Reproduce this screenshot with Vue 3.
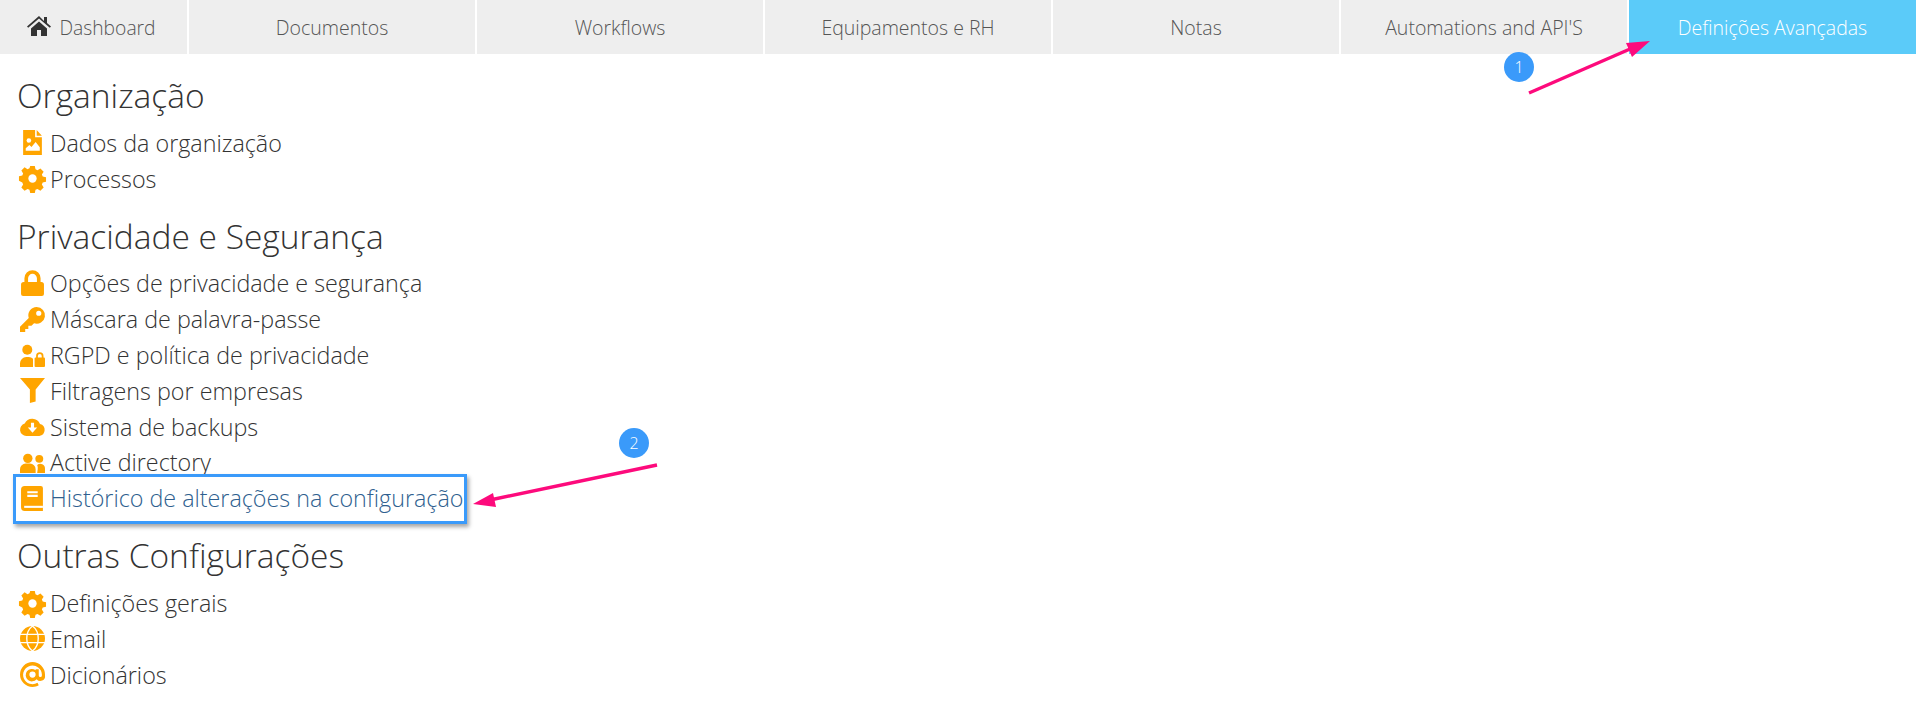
<script setup>
const tabs = [
  { label: 'Dashboard', home: true },
  { label: 'Documentos' },
  { label: 'Workflows' },
  { label: 'Equipamentos e RH' },
  { label: 'Notas' },
  { label: "Automations and API'S" },
  { label: 'Definições Avançadas', active: true },
]
const gear = 'M9.800 0h4.400l.7 3.200 1.900.8 2.800-1.700 3.100 3.100-1.700 2.800.8 1.900 3.200.7v4.400l-3.200.7-.8 1.900 1.700 2.800-3.100 3.100-2.800-1.700-1.900.8-.7 3.200H9.800l-.7-3.200-1.900-.8-2.800 1.700-3.100-3.100 1.700-2.800-.8-1.900L-1 14.200V9.800l3.200-.7.8-1.900-1.700-2.800 3.100-3.100 2.800 1.700 1.900-.8z'
const sections = [
  { title: 'Organização', items: [
    { label: 'Dados da organização', icon: 'file' },
    { label: 'Processos', icon: 'gear' },
  ] },
  { title: 'Privacidade e Segurança', items: [
    { label: 'Opções de privacidade e segurança', icon: 'lock' },
    { label: 'Máscara de palavra-passe', icon: 'key' },
    { label: 'RGPD e política de privacidade', icon: 'userlock' },
    { label: 'Filtragens por empresas', icon: 'filter' },
    { label: 'Sistema de backups', icon: 'cloud' },
    { label: 'Active directory', icon: 'users' },
    { label: 'Histórico de alterações na configuração', icon: 'book', link: true },
  ] },
  { title: 'Outras Configurações', items: [
    { label: 'Definições gerais', icon: 'gear' },
    { label: 'Email', icon: 'globe' },
    { label: 'Dicionários', icon: 'at' },
  ] },
]
</script>

<template>
  <div class="page">
    <nav class="tabs">
      <a v-for="t in tabs" :key="t.label" class="tab" :class="{ active: t.active, first: t.home }">
        <svg v-if="t.home" class="home" viewBox="0 0 24 20"><path d="M12 0L0 10.400l1.200 1.400L12 2.600l10.800 9.200 1.200-1.400-4-3.400V1h-3v3.900zM4 12.500V20h6v-6h4v6h6v-7.500L12 5.600z" fill="#333"/></svg>
        <span>{{ t.label }}</span>
      </a>
    </nav>
    <main class="content">
      <section v-for="s in sections" :key="s.title" class="section">
        <h2>{{ s.title }}</h2>
        <ul>
          <li v-for="i in s.items" :key="i.label" :class="{ link: i.link }">
            <svg class="ico" viewBox="0 0 24 24">
              <g v-if="i.icon === 'file'"><path d="M3 0h11.500v7H21v17H3z"/><path d="M16 0l5 5.500h-5z"/><circle cx="8.500" cy="10" r="2.200" fill="#fff"/><path d="M5.500 20v-2.500l3.500-3 2 1.700 4-4.700 4 5V20z" fill="#fff"/></g>
              <g v-if="i.icon === 'gear'"><path :d="gear"/><circle cx="12" cy="12" r="4" fill="#fff"/></g>
              <g v-if="i.icon === 'lock'"><path d="M1 13a2.500 2.500 0 0 1 2.500-2.500h17A2.500 2.500 0 0 1 23 13v9a2 2 0 0 1-2 2H3a2 2 0 0 1-2-2z"/><path d="M6 11V7a6 6 0 0 1 12 0v4" fill="none" stroke="#ffa500" stroke-width="3.500"/></g>
              <path v-if="i.icon === 'key'" d="M16 0a8 8 0 1 1-2.500 15.600L11 18H8v3H5v3H0v-5l8.400-8.400A8 8 0 0 1 16 0zm2 3.500a2.500 2.500 0 1 0 0 5 2.500 2.500 0 0 0 0-5z" fill-rule="evenodd"/>
              <g v-if="i.icon === 'userlock'"><circle cx="7" cy="6.500" r="4.800"/><path d="M0 23v-3.500A6 6 0 0 1 6 13.500h2.500a6 6 0 0 1 4 1.500v8z"/><rect x="14" y="14" width="10" height="9" rx="1"/><path d="M16.300 14.500v-2a2.700 2.700 0 0 1 5.400 0v2" fill="none" stroke="#ffa500" stroke-width="1.700"/></g>
              <path v-if="i.icon === 'filter'" d="M0 0h24L15 11v11.500L9.500 24V11z"/>
              <g v-if="i.icon === 'cloud'"><path d="M6 21a6 6 0 0 1-1.500-11.800A8 8 0 0 1 19.200 9.600 5.800 5.800 0 0 1 18.500 21z"/><path d="M10.500 8.500h3V13H16.500L12 18l-4.500-5h3z" fill="#fff"/></g>
              <g v-if="i.icon === 'users'"><circle cx="7.500" cy="8" r="4.500"/><circle cx="18.500" cy="8.500" r="3.800"/><path d="M0 22v-3.500A5.500 5.500 0 0 1 5.500 13h4a5.500 5.500 0 0 1 5.500 5.500V22z"/><path d="M16.500 22H24v-4a4.500 4.500 0 0 0-7.500-3.500 7 7 0 0 1 .5 4z"/></g>
              <g v-if="i.icon === 'book'"><path d="M4.500 0H20a2 2 0 0 1 2 2v22H4.500A3.500 3.500 0 0 1 1 20.500v-17A3.500 3.500 0 0 1 4.500 0z"/><path d="M7 5h10v2H7zm0 3.500h10v2H7z" fill="#fff"/><path d="M4 19h18v2H4z" fill="#fff"/></g>
              <g v-if="i.icon === 'globe'"><circle cx="12" cy="12" r="12"/><path d="M12 0c-4 3-5.500 8-5.500 12s1.500 9 5.500 12c4-3 5.500-8 5.500-12S16 3 12 0zM0 8h24M0 16h24" fill="none" stroke="#fff" stroke-width="1.300"/></g>
              <path v-if="i.icon === 'at'" d="M12 0a12 12 0 0 0 0 24c2.200 0 4.300-.6 6-1.600l-1.200-2.400A9 9 0 1 1 21 12v1a1.500 1.500 0 0 1-3 0V7h-3v.800A6 6 0 1 0 16 16.500a4.500 4.500 0 0 0 8-3.500v-1A12 12 0 0 0 12 0zm0 9a3 3 0 1 1 0 6 3 3 0 0 1 0-6z" fill-rule="evenodd"/>
            </svg>
            <span>{{ i.label }}</span>
          </li>
        </ul>
      </section>
    </main>

    <div class="highlight"></div>
    <div class="badge b1">1</div>
    <div class="badge b2">2</div>
    <svg class="arrows" viewBox="0 0 1916 704">
      <path d="M1529 93L1630 49" stroke="#fd0a7c" stroke-width="3.500" fill="none"/>
      <path d="M1650 41L1626 43 1632 57z" fill="#fd0a7c"/>
      <path d="M657 465L490 500" stroke="#fd0a7c" stroke-width="3.500" fill="none"/>
      <path d="M473 504L493 493 496 507z" fill="#fd0a7c"/>
    </svg>
  </div>
</template>

<style>
html, body { margin: 0; background: #fff; }
</style>

<style scoped>
.page {
  position: relative;
  width: 1916px;
  height: 704px;
  overflow: hidden;
  font-family: "Open Sans", "Liberation Sans", sans-serif;
  font-weight: 300;
  color: #333;
}
.tabs {
  display: grid;
  grid-template-columns: 187px repeat(5, 286px) 1fr;
  gap: 2px;
  height: 54px;
}
.tab {
  display: flex;
  align-items: center;
  justify-content: center;
  gap: 8px;
  background: #eee;
  color: #555;
  font-size: 19.500px;
}
.tab.first { padding-right: 4px; font-size: 19.300px; }
.tab.active { background: #5bcbf9; color: #fff; }
.home { width: 24px; height: 20px; margin-top: -3px; flex: none; }
.content { padding: 18px 0 0 17px; }
h2 {
  margin: 0;
  font-size: 33.500px;
  font-weight: 300;
  line-height: 47px;
}
ul {
  list-style: none;
  margin: 6px 0 16px;
  padding: 0;
}
li {
  display: flex;
  align-items: center;
  height: 35.800px;
  font-size: 23.300px;
  gap: 5px;
  white-space: nowrap;
}
li.link { color: #2f5f8f; }
.ico {
  width: 25px;
  height: 25px;
  margin-left: 3px;
  fill: #ffa500;
  flex: none;
  overflow: visible;
}
.highlight {
  position: absolute;
  left: 13px;
  top: 474px;
  width: 454px;
  height: 50px;
  border: 3px solid #3a9afa;
  box-sizing: border-box;
  box-shadow: 2px 3px 4px rgba(0, 0, 0, .35);
}
.badge {
  position: absolute;
  width: 30px;
  height: 30px;
  border-radius: 50%;
  background: #3a9afa;
  color: #fff;
  font-size: 16px;
  display: flex;
  align-items: center;
  justify-content: center;
}
.b1 { left: 1504px; top: 52px; }
.b2 { left: 619px; top: 428px; }
.arrows {
  position: absolute;
  inset: 0;
  width: 1916px;
  height: 704px;
  pointer-events: none;
}
</style>
